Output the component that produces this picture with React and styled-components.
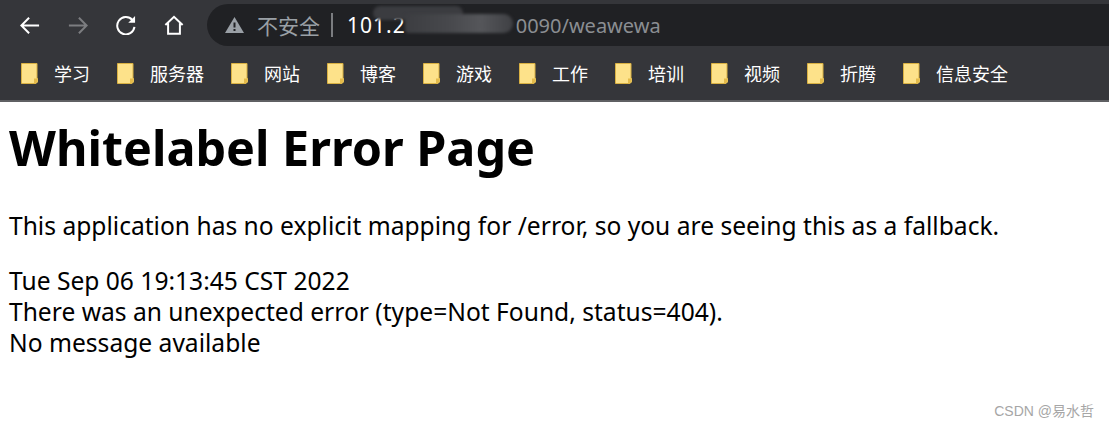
import styled, { createGlobalStyle } from "styled-components";

const GlobalStyle = createGlobalStyle`
  html, body {
    margin: 0;
    padding: 0;
    background: #fff;
  }
`;

const Page = styled.div`
  width: 1109px;
  height: 428px;
  position: relative;
  overflow: hidden;
  font-family: "Noto Sans", "Noto Sans CJK SC", sans-serif;
`;

const Chrome = styled.header`
  background: #35363a;
  height: 100px;
  border-bottom: 2px solid #5f6063;
`;

const Toolbar = styled.div`
  height: 46px;
  display: flex;
  align-items: flex-end;
  padding-left: 14px;
`;

const NavGroup = styled.div`
  display: flex;
  gap: 16px;
  height: 42px;
  align-items: center;
  margin-right: 17px;
`;

const NavButton = styled.span`
  width: 32px;
  height: 32px;
  display: flex;
  align-items: center;
  justify-content: center;
`;

const AddressBar = styled.div`
  flex: 1;
  height: 42px;
  position: relative;
  display: flex;
  align-items: center;
  background: #202124;
  border-radius: 21px 0 0 21px;
  padding-left: 18px;
`;

const Insecure = styled.span`
  color: #9aa0a6;
  font-size: 21px;
  margin-left: 13px;
  font-family: "Noto Sans CJK SC", sans-serif;
`;

const Divider = styled.span`
  width: 2px;
  height: 24px;
  background: #7b7d80;
  margin: 0 14px 0 11px;
`;

const Host = styled.span`
  color: #fff;
  font-size: 21px;
  letter-spacing: 1px;
`;

const Path = styled.span`
  color: #8b8e92;
  font-size: 20px;
  margin-left: 110px;
`;

const SmudgeTop = styled.div`
  position: absolute;
  left: 166px;
  top: 2px;
  width: 90px;
  height: 14px;
  border-radius: 8px;
  background: #3b3c40;
  filter: blur(1.5px);
`;

const SmudgeBottom = styled.div`
  position: absolute;
  left: 198px;
  top: 10px;
  width: 108px;
  height: 19px;
  border-radius: 4px 10px 10px 4px;
  background: linear-gradient(90deg, #3c3d41 0%, #47484c 40%, #55565a 70%, #3f4044 100%);
  filter: blur(1.5px);
`;

const BookmarkBar = styled.nav`
  height: 54px;
  display: flex;
  align-items: center;
  padding: 0 0 0 21px;
  gap: 27px;
`;

const Bookmark = styled.a`
  display: flex;
  align-items: center;
  gap: 16px;
  color: #fff;
  font-size: 18px;
  line-height: 24px;
  font-family: "Noto Sans CJK SC", sans-serif;
`;

const Content = styled.main`
  padding: 0 9px;
  color: #000;
`;

const Title = styled.h1`
  margin: 15px 0 0;
  font-size: 48.5px;
  line-height: 60px;
  font-weight: 700;
`;

const Lead = styled.p`
  margin: 34px 0 24px;
  font-size: 24.6px;
  line-height: 30px;
`;

const Line = styled.div`
  font-size: 24.6px;
  line-height: 31px;
`;

const Watermark = styled.div`
  position: absolute;
  right: 15px;
  top: 402px;
  color: #a6a6a6;
  font-size: 14px;
  line-height: 18px;
  font-family: "Liberation Sans", "Noto Sans CJK SC", sans-serif;
`;

const FolderIcon = () => (
  <svg width="17" height="21" viewBox="0 0 17 21">
    <path d="M.5.5h15.500V15.500h1v3l-2 2H.5z" fill="#fde28a" stroke="#d9b143" />
    <path d="M16.500 15.500v3l-2 2h-1.500v-5h3.500z" fill="#e4bb4b" />
  </svg>
);

const bookmarks = ["学习", "服务器", "网站", "博客", "游戏", "工作", "培训", "视频", "折腾", "信息安全"];

export default function App() {
  return (
    <Page>
      <GlobalStyle />
      <Chrome>
        <Toolbar>
          <NavGroup>
            <NavButton>
              <svg width="20" height="19" viewBox="0 0 22 20" fill="none" stroke="#fff" strokeWidth="2.200">
                <path d="M21 10H2M10 1.500L1.500 10l8.500 8.500" />
              </svg>
            </NavButton>
            <NavButton>
              <svg width="20" height="19" viewBox="0 0 22 20" fill="none" stroke="#7c7d80" strokeWidth="2.200">
                <path d="M1 10h19M12 1.500L20.500 10 12 18.500" />
              </svg>
            </NavButton>
            <NavButton>
              <svg width="20" height="20" viewBox="0 0 22 22" fill="none">
                <path d="M18 5.500A9.500 9.500 0 1 0 20.300 13" stroke="#fff" strokeWidth="2.200" />
                <path d="M21 1v7.500h-7.500z" fill="#fff" />
              </svg>
            </NavButton>
            <NavButton>
              <svg width="20" height="20" viewBox="0 0 22 22" fill="none" stroke="#fff" strokeWidth="2.200">
                <path d="M1.500 11L11 2l9.500 9M4.500 9v11.500h13V9" />
              </svg>
            </NavButton>
          </NavGroup>
          <AddressBar>
            <svg width="19" height="16" viewBox="0 0 19 16">
              <path d="M9.500 0L19 16H0zM8.500 5.500v5h2v-5zm0 6.500v2h2v-2z" fill="#9aa0a6" fillRule="evenodd" />
            </svg>
            <Insecure>不安全</Insecure>
            <Divider />
            <Host>101.2</Host>
            <Path>0090/weawewa</Path>
            <SmudgeTop />
            <SmudgeBottom />
          </AddressBar>
        </Toolbar>
        <BookmarkBar>
          {bookmarks.map((name) => (
            <Bookmark key={name}>
              <FolderIcon />
              {name}
            </Bookmark>
          ))}
        </BookmarkBar>
      </Chrome>
      <Content>
        <Title>Whitelabel Error Page</Title>
        <Lead>This application has no explicit mapping for /error, so you are seeing this as a fallback.</Lead>
        <Line>Tue Sep 06 19:13:45 CST 2022</Line>
        <Line>There was an unexpected error (type=Not Found, status=404).</Line>
        <Line>No message available</Line>
      </Content>
      <Watermark>CSDN @易水哲</Watermark>
    </Page>
  );
}
